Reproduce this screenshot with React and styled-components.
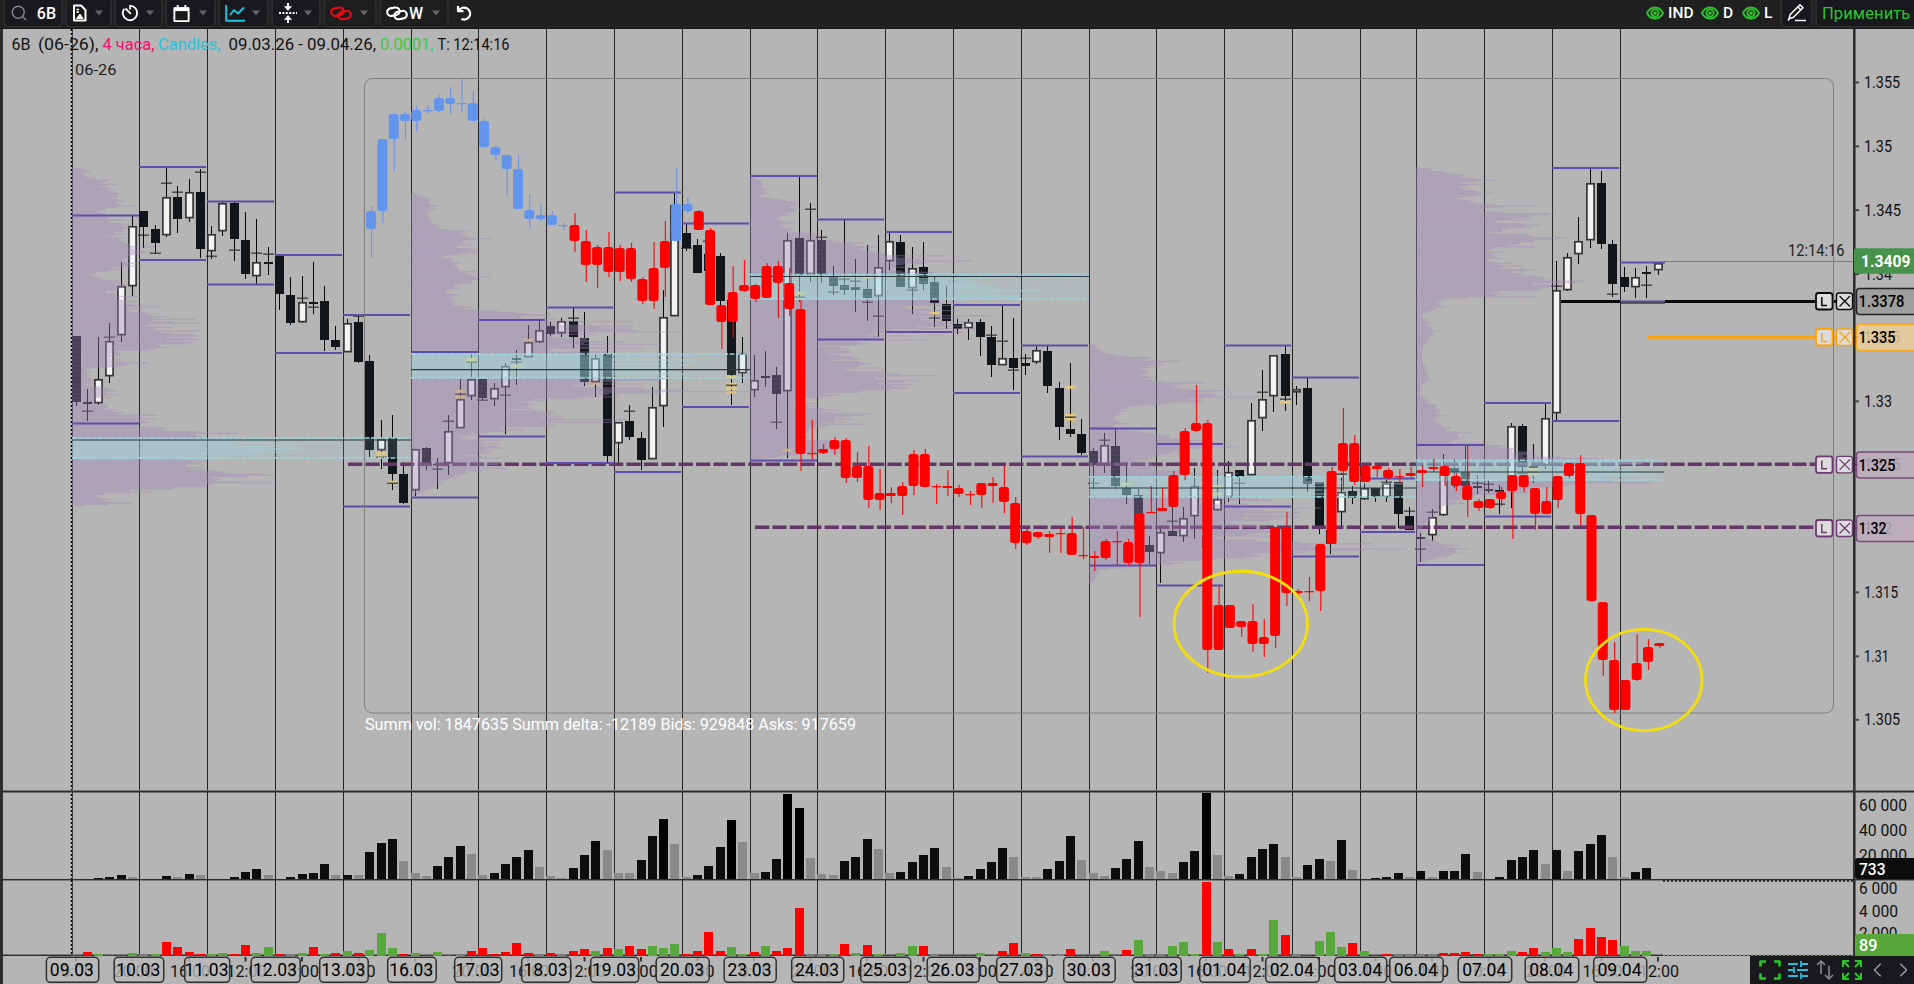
import React from "react";
import styled, { createGlobalStyle } from "styled-components";
import { Search } from "lucide-react";

const FONT = '"Roboto", "Noto Sans", sans-serif';

const GlobalStyle = createGlobalStyle`
  body {
    margin: 0;
    background: #b5b5b5;
    font-family: ${FONT};
    overflow: hidden;
  }

  svg {
    display: block;
    flex: none;
  }
`;

const Terminal = styled.div`
  display: flex;
  flex-direction: column;
  width: 1914px;
  height: 984px;
  overflow: hidden;
  background: #b5b5b5;
`;

const TopBar = styled.header`
  display: flex;
  align-items: flex-start;
  box-sizing: border-box;
  height: 29px;
  padding-left: 3px;
  background: #202020;
  border-bottom: 1px solid #161616;
`;

const ToolButton = styled.button`
  display: flex;
  align-items: center;
  justify-content: space-between;
  box-sizing: border-box;
  width: ${(props) => props.$width}px;
  height: 31px;
  margin: -3px 2px 0 0;
  padding: 1px ${(props) => props.$right || 7}px 0 5px;
  background: ${(props) => (props.$flat ? "#1e1e1e" : "#18181d")};
  border: 2px solid #2b2b2d;
  border-radius: 6px;
  color: ${(props) => props.$color || "#fff"};
  font-family: ${FONT};
  font-size: 16px;
  font-weight: 500;
  flex: none;
`;

const PlainTool = styled.span`
  display: flex;
  align-items: center;
  height: 25px;
  margin-left: 5px;
`;

const LinkLabel = styled.span`
  margin-left: -8px;
`;

const Spacer = styled.div`
  flex: 1;
`;

const Toggle = styled.span`
  display: flex;
  align-items: center;
  gap: 4px;
  box-sizing: border-box;
  width: ${(props) => props.$width}px;
  height: 26px;
  color: #fff;
  font-size: 15.5px;
  font-weight: 500;
`;

const Apply = styled.button`
  box-sizing: border-box;
  width: 99px;
  height: 31px;
  margin: -3px 0 0 0;
  padding: 1px 0 0 5px;
  text-align: left;
  white-space: nowrap;
  background: #18181d;
  border: 2px solid #2b2b2d;
  border-right: 0;
  border-radius: 6px 0 0 6px;
  color: #2dc52d;
  font-family: ${FONT};
  font-size: 16.5px;
  letter-spacing: 0.1px;
`;

const Workspace = styled.main`
  display: grid;
  box-sizing: border-box;
  grid-template-columns: 1850px 61px;
  grid-template-rows: 761px 89px 77px 28px;
  height: 955px;
  border-left: 3px solid #2e2e2f;
`;

const TimeRow = styled.div`
  grid-column: 1 / 3;
  display: flex;
`;

const BottomTools = styled.div`
  display: flex;
  align-items: center;
  box-sizing: border-box;
  width: 164px;
  height: 28px;
  padding: 0 0 0 9px;
  gap: 7px;
  background: #18181d;
`;

/* ---------- data ---------- */

const STEP = 11.3;
const FIRST_X = 72;
const barLeft = (i) => Math.floor(FIRST_X + STEP * i);

// U - up, D - down, J - doji; top bottom high low, then t - poc mark, y - cluster mark
const CANDLES = `
D 336 402 336 406|J 402 404 389 421 t411|U 379 403 337 405|U 341 376 323 383 t337|U 286 335 262 342|U 226 286 216 296
D 211 227 211 248 t235|D 229 243 225 254 t253|U 197 235 168 237 t183|D 197 219 186 233 t192|U 192 218 179 222|D 192 249 169 258 t172
U 234 251 226 259 t256|U 203 231 202 236|D 203 239 202 261 t250|D 240 274 212 279|U 262 276 219 284 t253|J 262 264 247 275 t254
D 255 294 255 310|D 295 323 277 325|U 302 322 276 323 t298|J 302 304 262 314 t307|D 301 340 286 351|D 340 347 326 350
U 323 352 319 352|D 322 362 315 363 t316|D 361 450 355 457|U 439 450 420 469 y453 y456 t457|D 438 474 415 490 y482 t483|D 474 503 462 504
U 449 490 449 496|D 448 464 447 470|J 464 465 458 489 t469|U 431 463 415 475 t421|U 399 428 379 428 y391 y397 t394|U 379 396 353 400 y359 y361 t362
D 379 398 379 401 t400|U 388 399 383 406|U 366 387 363 434 t395|J 358 360 350 385 t362 y366|U 342 357 325 357 y340|U 330 342 320 343
D 326 334 322 336|U 321 333 318 337|D 321 337 308 348 t318|D 338 382 312 386|U 358 382 354 397 y383|D 354 456 336 462
U 422 443 422 463|D 421 437 405 440 t411|D 438 460 432 470|U 407 459 387 459|U 317 406 290 427|U 205 316 193 316
D 233 248 224 251 t248|D 245 273 239 273|D 254 271 241 271 t241|D 256 301 253 305|D 300 375 300 405 y377 y384 y388 y392 t385|U 353 373 337 383
U 380 390 355 397|J 376 378 351 387|D 375 394 367 429 t422|U 240 391 233 458 y450|D 238 275 176 302 y293 y298 t297|U 240 274 203 282 t209
D 240 275 230 283 t237|D 277 286 266 295 t292|D 285 290 220 295 t279|D 287 290 259 312 t281|D 289 298 245 321 t302 y277|U 267 296 235 337 t316
U 241 261 232 270|D 242 287 235 287|U 268 288 247 314 t290|D 267 284 242 290|D 282 303 277 327 y313 t318|D 304 321 286 329
D 324 329 319 334|U 322 328 319 340|D 322 337 319 356|D 337 365 326 377 t335|U 358 365 305 365 t341|D 358 368 318 390 t370
J 363 366 354 375 t358|U 350 362 346 364|D 351 386 346 393|D 388 427 382 440|D 429 434 363 437 y387 y415 y419 t417|D 434 453 419 455
D 451 465 448 489 t483|U 445 464 433 473 t440|D 446 486 429 489|D 488 495 462 504 y484|D 495 530 489 530|D 545 552 536 564
U 532 553 528 583|D 531 536 497 536 t521|U 518 536 507 542|U 486 516 468 539|D 536 548 530 552 y549|U 499 510 470 511 y486 y494
U 472 497 461 502|D 470 477 470 504 t483|U 420 475 403 475|U 399 418 370 431 t392|U 355 396 355 412|D 354 396 346 411 t399 y402
U 389 392 386 405|D 388 484 378 492|D 482 529 482 534|D 530 544 530 554|U 492 512 473 527 y476 t474|D 491 498 486 504
U 488 499 483 500|D 488 497 488 502|U 483 497 480 502 t482|D 482 514 482 528|D 516 530 507 530 t511|J 537 539 533 562 t549
U 517 535 509 541 t512|U 474 515 454 516|D 468 472 460 488|D 472 486 445 488|J 486 488 475 494 t483|J 489 491 480 493 t484
J 490 492 485 514 t504|U 426 490 423 508|D 426 467 424 474 t473|D 466 468 444 483 y469 y472 y474 t472|U 418 465 403 469|U 290 413 261 420 t286
U 257 290 253 291|U 241 254 217 264|U 183 240 168 248|D 183 244 171 249|D 244 284 240 297 t294|D 277 287 267 292
U 277 287 268 298|J 272 274 266 298 t285|U 263 270 263 275`
  .trim()
  .split(/[|\n]/)
  .map((row) => {
    const [kind, top, bottom, high, low, ...marks] = row.split(" ");
    return { kind, top: +top, bottom: +bottom, high: +high, low: +low, marks };
  });

// second instrument, drawn over the main one: top bottom high low
const OVERLAY_START = 26;
const OVERLAY = `
211 229 206 258|139 211 139 223|114 139 114 171|114 121 112 140|110 121 106 131|110 111 105 114|98 111 95 112|98 104 87 114
103 104 79 112|103 121 91 121|121 147 119 148|147 155 145 161|155 169 155 197|169 209 155 209|210 219 194 229|215 219 203 221
215 225 211 225|225 226 223 230|225 241 213 252|241 265 230 282|247 265 245 288|247 272 232 277|248 272 245 281|248 279 243 282
279 301 277 304|268 301 242 309|241 268 221 297|204 241 168 241|204 211 198 213|211 230 210 230|230 305 228 305|305 322 305 349
292 322 266 338|285 291 260 292|285 299 284 302|266 298 263 298|266 283 261 318|283 309 268 316|309 454 300 471|453 454 420 460
449 453 444 454|440 449 437 455|440 478 438 483|466 478 452 482|466 500 446 508|493 500 469 510|493 496 487 503|486 496 482 515
454 486 450 495|454 487 449 487|486 487 484 504|486 488 470 496|488 494 485 497|494 495 491 505|483 495 483 508|483 486 477 503
487 502 466 513|503 543 497 549|531 543 529 545|532 537 532 539|534 537 531 553|533 534 527 553|533 555 517 555|555 556 527 559
556 558 551 571|541 558 539 560|541 542 531 565|542 563 539 565|513 563 513 617|512 513 486 513|508 511 488 511|475 507 471 507
431 475 428 480|423 431 385 432|423 650 420 673|605 650 586 650|605 628 605 628|621 627 621 637|621 644 604 652|637 644 619 657
527 636 527 648|527 593 512 606|591 593 589 595|591 592 577 601|544 591 544 611|471 544 467 544|443 471 408 490|443 482 435 485
466 482 466 482|466 469 465 477|470 478 468 480|476 477 469 483|473 476 467 478|470 473 465 487|467 469 459 472|466 476 465 486
476 486 473 491|486 500 445 517|501 508 499 511|499 508 499 509|492 499 487 506|475 491 475 539|475 487 475 492|488 514 488 530
501 514 487 514|476 500 476 508|463 476 463 478|463 514 455 526|515 601 515 602|602 660 602 676|660 710 642 713|680 710 680 710
663 680 634 681|647 662 639 670|643 646 643 648`
  .trim()
  .split(/[|\n]/)
  .map((row) => row.split(" ").map(Number));

const isBlue = (i) => i < 44 || i === 53 || i === 54;

// x, high line, low line
const DAYS = [
  [72, 215.5, 423.5], [139, 167, 260], [207, 201.5, 284.5], [275, 255, 353], [343, 315, 506.5], [411, 352, 497.5],
  [478, 320, 436.5], [546, 307.5, 463], [614, 192.5, 472], [682, 223.5, 407], [750, 176, 460.5], [817, 219.5, 339.5],
  [885, 232, 332], [953, 305, 393], [1021, 345.5, 456.5], [1089, 428.5, 565.5], [1156, 444, 585.5], [1224, 345.5, 506.5],
  [1292, 377.5, 556.5], [1360, 478.5, 532], [1416, 445, 565], [1484, 403, 516.5], [1552, 168, 421], [1620, 262.5, 301.5],
];

const WEEKS = [
  {
    from: 72, to: 411, top: 438, bottom: 458, poc: 440,
    shape: "167:0 170:22 174:10 182:35 186:30 192:45 198:48 201:58 206:45 213:25 222:45 228:66 236:40 245:75 252:85 256:60 265:70 272:30 275:20 284:55 290:40 298:55 308:68 315:85 322:95 330:95 337:125 342:112 347:90 352:45 358:40 362:75 368:15 380:20 385:18 390:45 400:20 410:45 420:85 425:65 430:105 436:150 440:190 445:205 448:235 454:190 459:120 465:125 471:150 474:200 478:165 482:155 488:110 490:70 494:25 500:40 503:45 506:0",
  },
  {
    from: 411, to: 750, top: 354, bottom: 378, poc: 369.7,
    shape: "192:0 197:18 206:22 213:15 220:20 228:35 233:55 238:60 244:45 252:70 256:35 265:50 273:70 276:80 282:65 290:40 297:50 305:45 310:75 314:120 318:150 325:190 329:225 333:180 342:190 348:170 354:200 360:270 368:240 375:260 382:200 387:220 392:265 395:200 400:140 405:110 412:130 418:165 424:140 428:110 436:55 443:80 447:95 455:60 462:85 470:65 478:40 485:25 492:12 496:0",
  },
  {
    from: 750, to: 1089, top: 274.5, bottom: 299, poc: 276.5,
    shape: "176:0 180:12 190:14 196:10 201:45 208:50 210:62 214:30 222:35 228:30 234:65 241:100 248:120 255:180 260:225 265:160 270:180 275:200 282:260 288:260 295:255 301:230 307:190 315:180 321:240 328:165 336:150 340:130 346:90 355:95 365:110 372:130 380:150 386:175 390:120 394:85 398:55 405:45 413:110 420:100 428:65 436:50 445:95 450:90 455:40 460:0",
  },
  {
    from: 1089, to: 1416, top: 476.7, bottom: 497, poc: 488,
    shape: "344:5 352:15 358:55 361:70 370:55 378:70 382:85 392:110 396:130 402:100 406:50 412:30 418:28 422:38 426:30 431:55 437:105 440:120 445:150 450:110 457:57 465:60 474:120 480:260 488:250 495:220 500:130 510:190 515:205 522:150 530:170 540:160 546:260 549:290 553:200 560:110 565:60 570:8 580:6 583:0",
  },
  {
    from: 1416, to: 1664, top: 460.3, bottom: 480, poc: 472,
    shape: "167:5 173:40 178:65 183:50 188:45 192:75 198:45 205:90 210:70 215:125 220:80 226:128 232:90 238:145 243:125 250:90 256:85 262:95 268:110 275:130 281:150 286:130 292:95 296:90 299:25 310:20 315:4 325:15 332:20 340:12 350:5 365:8 378:15 385:5 395:4 402:15 410:25 420:20 430:35 436:50 441:35 446:90 455:130 460:200 465:225 472:240 478:210 483:170 490:100 497:50 505:30 515:20 525:8 535:5 543:25 549:50 555:35 560:10 563:0",
  },
];

const LEVEL = 1.276;

const profileRows = ({ shape }) => {
  const points = shape.split(" ").map((p) => p.split(":").map(Number));
  const rows = [];
  let k = 0;
  for (let y = points[0][0], n = 0; y < points[points.length - 1][0]; y += LEVEL, n++) {
    while (points[k + 1][0] < y) k++;
    const [y0, w0] = points[k];
    const [y1, w1] = points[k + 1];
    const noise = Math.sin(n * 12.9898) * 43758.5453;
    const rnd = noise - Math.floor(noise);
    const spike = rnd > 0.93 ? 0.2 : 0;
    const width = (w0 + ((w1 - w0) * (y - y0)) / (y1 - y0)) * (0.76 + rnd * 0.4 + spike);
    rows.push({ y, width });
  }
  return rows;
};

// g - outside of the main session, d - regular, k - extreme
const VOLUME =
  "d0 d0 d1 d2 d4 g2 g0 g0 d3 g2 d5 g4 g0 g0 d2 d7 d10 g4 g0 d2 d5 d6 d15 g4 d4 g4 d27 d36 d40 g18 g6 g3 d13 d22 d33 g25 g4 d6 d15 d22 d29 g12 g3 g1 d11 d24 d38 g29 g6 g6 " +
  "d19 d43 k60 g35 g2 d4 d13 d32 k59 g37 g6 d7 d20 k85 k71 g21 g5 g4 d18 d22 d40 g30 g6 d7 d17 d24 d31 g12 g1 d3 d10 d17 d31 g22 g2 g2 d10 d18 d43 g19 g6 g3 d11 d20 d38 g12 g8 g6 d17 d28 " +
  "k86 g24 g3 d5 d22 d30 d35 g22 g2 d14 d20 g18 d39 g9 g0 d1 d2 d6 g2 d8 g2 d8 d8 d25 g7 g0 d2 d19 d22 d29 g15 d29 g8 d28 d35 d44 g22 g2 d7 d11";

const DELTA =
  "r1 r4 g2 r-1 r1 g3 g0 g2 r14 r9 r4 r2 g2 g3 r2 r11 g3 g9 r2 g1 g3 r9 g2 r3 g5 r3 g6 g23 g8 r2 g3 r1 g4 r1 g-1 r5 r8 r2 r4 r13 r3 g1 r3 g0 r5 r7 g5 r8 g7 r10 " +
  "r7 g10 g8 g12 r2 r5 r24 r5 g9 g2 r4 g10 r5 r8 r48 g1 g0 g2 r12 g3 r11 g2 r1 g3 g10 r10 g0 r-1 r1 r-1 g3 r1 r5 r13 g3 r2 g0 g-1 r7 r1 r1 g5 r-1 r6 g16 g0 g0 g10 g14 g2 " +
  "r74 g14 r7 g2 r7 g2 g36 r21 g1 r-1 g15 g24 g9 r13 g5 r1 r2 g1 g1 g1 g1 r3 r3 r4 r2 g2 g2 g5 r4 r8 g4 g8 g4 r17 r28 r19 r16 g10 g5 g5";

const parseBars = (text) =>
  text.split(" ").map((item) => ({ kind: item[0], value: Number(item.slice(1)) }));

const BAR_COLORS = { g: "#8a8a8a", d: "#0d0d0d", k: "#000" };
const DELTA_COLORS = { r: "#ff0000", g: "#58a73a" };

const PRICES = [
  ["1.355", 82.5, 36], ["1.35", 146.3, 28], ["1.345", 210.1, 37], ["1.34", 274.1, 28], ["1.335", 337.5, 36], ["1.33", 401.3, 28],
  ["1.325", 464.8, 36], ["1.32", 528.3, 28], ["1.315", 592.3, 34], ["1.31", 656.3, 25], ["1.305", 719.8, 36],
];

const TAGS = [
  { price: "1.3378", y: 301, color: "#0a0a0a", fill: "#9a9a9a", width: 46 },
  { price: "1.335", y: 337, color: "#ffa30a", fill: "#ebd09a", width: 37 },
  { price: "1.325", y: 464.4, color: "#6d3b70", fill: "#bdabbc", width: 37 },
  { price: "1.32", y: 528, color: "#6d3b70", fill: "#bdabbc", width: 28 },
];

const DATES = [
  ["09.03", 45.7, 99], ["10.03", 113.5, 164], ["11.03", 184, 230], ["12.03", 250.5, 300.5], ["13.03", 319, 368.5],
  ["16.03", 387, 436.5], ["17.03", 454, 502], ["18.03", 521, 571], ["19.03", 590, 639], ["20.03", 655.5, 709.5],
  ["23.03", 723.5, 776.5], ["24.03", 791, 844], ["25.03", 860, 911], ["26.03", 926.5, 979.5], ["27.03", 996, 1047.5],
  ["30.03", 1063, 1115.5], ["31.03", 1132, 1181.5], ["01.04", 1199, 1250.5], ["02.04", 1265, 1319.5], ["03.04", 1334, 1387],
  ["06.04", 1389, 1443.5], ["07.04", 1457.5, 1512], ["08.04", 1524.5, 1579], ["09.04", 1593, 1647],
];

const HOURS = ["0:00", "20:00", "16:00", "12:00", "8:00", "4:00"];

/* ---------- chart parts ---------- */

const Label = ({ x, y, w, size = 16, fill = "#111", weight = 400, children, ...rest }) => (
  <text
    x={x}
    y={y}
    textLength={w}
    lengthAdjust="spacingAndGlyphs"
    fontFamily={FONT}
    fontSize={size}
    fontWeight={weight}
    fill={fill}
    xmlSpace="preserve"
    {...rest}
  >
    {children}
  </text>
);

const DayLines = ({ top, bottom }) => (
  <g>
    {DAYS.slice(1).map(([x]) => (
      <path key={x} d={`M${x + 0.5} ${top}V${bottom}`} stroke="#242424" strokeWidth="1" />
    ))}
    <path d={`M72.5 ${top}V${bottom}`} stroke="#444" strokeWidth="1" />
    <path d={`M71.5 ${top}V${bottom}`} stroke="#000" strokeWidth="1.4" strokeDasharray="2 2" />
  </g>
);

const Candle = ({ x, candle }) => {
  const { kind, top, bottom, high, low, marks } = candle;
  const up = kind === "U";
  return (
    <g>
      <rect x={x + 4} y={high} width="1" height={Math.max(low - high, 1)} fill="#080808" />
      {marks.map((mark) => {
        const y = Number(mark.slice(1));
        return mark[0] === "y" ? (
          <rect key={mark} x={x - 1} y={y - 1.2} width="10.5" height="2.8" fill="#e6c87a" />
        ) : (
          <rect key={mark} x={x - 1} y={y - 0.5} width="11" height="1.4" fill="#262626" opacity=".8" />
        );
      })}
      {up ? (
        <rect
          x={x + 0.9}
          y={top + 0.8}
          width="7.2"
          height={Math.max(bottom - top - 1.2, 2)}
          fill="#f3f3f3"
          stroke="#363636"
          strokeWidth="1.7"
        />
      ) : (
        <rect x={x} y={top} width="9" height={bottom - top} fill="#101619" />
      )}
    </g>
  );
};

const OverlayCandle = ({ index, data }) => {
  const [top, bottom, high, low] = data;
  const cx = FIRST_X + STEP * index + 5.3;
  const color = isBlue(index) ? "#6495ed" : "#ff0000";
  const thin = bottom - top < 2;
  return (
    <g fill={color}>
      <rect x={cx - 0.1} y={high} width="1.2" height={Math.max(low - high, 1)} opacity=".9" />
      {thin ? (
        <rect x={cx - 4.6} y={top} width="9.6" height="1.3" opacity=".9" />
      ) : (
        <rect x={cx - 5} y={top} width="10" height={bottom - top} rx={Math.min(2.5, (bottom - top) / 2)} />
      )}
    </g>
  );
};

const Profile = ({ week }) => (
  <g>
    {profileRows(week).map(({ y, width }) => {
      const inside = y >= week.top && y <= week.bottom;
      return (
        <rect
          key={y}
          x={week.from}
          y={y}
          width={Math.min(width, 340)}
          height={LEVEL}
          fill={inside ? "rgb(160,210,220)" : "rgb(162,136,185)"}
          opacity={inside ? 0.5 : 0.42}
        />
      );
    })}
    <rect x={week.from} y={week.top} width={week.to - week.from} height={week.bottom - week.top} fill="#a5d5df" opacity=".14" />
    <path
      d={`M${week.from} ${week.top}H${week.to}M${week.from} ${week.bottom}H${week.to}`}
      stroke="#9ad3df"
      strokeWidth="1.6"
      strokeDasharray="5 1.5"
    />
    <path d={`M${week.from} ${week.poc}H${week.to}`} stroke="#2d3a3c" strokeWidth="1.2" />
  </g>
);

const PriceChart = () => (
  <svg width="1850" height="761" viewBox="3 29 1850 761">
    <DayLines top={29} bottom={791} />

    {CANDLES.map((candle, i) => (
      <Candle key={i} x={barLeft(i)} candle={candle} />
    ))}

    <path d="M348 464.3H1816M755 527.3H1816" stroke="#653768" strokeWidth="3.4" strokeDasharray="14.3 3.1" fill="none" />

    {WEEKS.map((week) => (
      <Profile key={week.from} week={week} />
    ))}

    {DAYS.map(([x, high, low], i) => {
      const end = i === DAYS.length - 1 ? 1665 : DAYS[i + 1][0] - (i % 5 === 0 ? 0 : 1);
      return <path key={x} d={`M${x} ${high}H${end}M${x} ${low}H${end}`} stroke="#5f4cab" strokeWidth="2" />;
    })}

    <path d="M1665 261.5H1853" stroke="#4f9a55" strokeWidth="1" />
    <path d="M1561 301.5H1620M1665 301.5H1853" stroke="#0a0a0a" strokeWidth="2.8" />
    <path d="M1620 303H1665" stroke="#0a0a0a" strokeWidth="1.2" />
    <path d="M1647 337.3H1853" stroke="#ffa30a" strokeWidth="2.8" />

    <rect x="364.5" y="78.5" width="1469" height="634.5" rx="8" fill="none" stroke="#7e7e7e" />

    {OVERLAY.map((data, k) => (
      <OverlayCandle key={k} index={OVERLAY_START + k} data={data} />
    ))}

    <g fill="none" stroke="#f3dd0c" strokeWidth="2.9">
      <ellipse cx="1240.8" cy="624" rx="66.7" ry="52.7" />
      <ellipse cx="1643.8" cy="680" rx="58.2" ry="50.6" />
    </g>

    {TAGS.map(({ price, y, color }) => (
      <g key={price} stroke={color} fill="#dcdcdc">
        <rect x="1816" y={y - 8} width="16.5" height="16.5" rx="2.5" strokeWidth="1.8" />
        <rect x="1836.5" y={y - 8} width="16" height="16.5" rx="2.5" strokeWidth="1.4" />
        <path d={`M1821.8 ${y - 4}v8.4h5.2`} fill="none" strokeWidth="1.5" />
        <path d={`M1839.5 ${y - 5}l10.5 10.5m0 -10.5l-10.5 10.5`} fill="none" strokeWidth="1.3" />
      </g>
    ))}

    <Label x={11.5} y={50} w={19}>6B</Label>
    <Label x={38} y={50} w={60.5}>(06-26),</Label>
    <Label x={102.5} y={50} w={52} fill="#f0106c">4 часа,</Label>
    <Label x={158} y={50} w={62.5} fill="#22c4e0">Candles,</Label>
    <Label x={228.5} y={50} w={147.5}>09.03.26 - 09.04.26,</Label>
    <Label x={380} y={50} w={53.5} fill="#35cd35">0.0001,</Label>
    <Label x={437.5} y={50} w={72}>T: 12:14:16</Label>
    <Label x={75} y={74.7} w={41.5} size={15} fill="#222">06-26</Label>
    <Label x={1788} y={255.7} w={56.5} fill="#222">12:14:16</Label>
    <Label x={365} y={730} w={491} fill="#fff">
      Summ vol: 1847635 Summ delta: -12189 Bids: 929848 Asks: 917659
    </Label>
  </svg>
);

const PriceAxis = () => (
  <svg width="61" height="761" viewBox="1853 29 61 761">
    <rect x="1853" y="29" width="2.6" height="762" fill="#303030" />
    {PRICES.map(([text, y, w]) => (
      <g key={text}>
        <rect x="1855" y={y - 1} width="4" height="2" fill="#444" />
        <Label x={1864} y={y + 5.5} w={w}>{text}</Label>
      </g>
    ))}
    <rect x="1854" y="248.3" width="70" height="25.5" rx="3" fill="#46924a" />
    <Label x={1861} y={266.7} w={49.5} size={17} fill="#fff" weight={700}>1.3409</Label>
    {TAGS.map(({ price, y, color, fill, width }) => (
      <g key={price}>
        <rect x="1856.5" y={y - 12.5} width="70" height="26" rx="3" fill={fill} fillOpacity=".84" stroke={color} strokeWidth="1.5" strokeOpacity=".85" />
        <Label x={1858.5} y={y + 6.3} w={width} fill="#000" weight={500}>{price}</Label>
      </g>
    ))}
  </svg>
);

const VolumePanel = () => (
  <svg width="1850" height="89" viewBox="3 790 1850 89">
    <DayLines top={790} bottom={880} />
    <rect x="3" y="790" width="1850" height="1" fill="#777" />
    <rect x="3" y="791" width="1850" height="1.5" fill="#2c2c2c" />
    {parseBars(VOLUME).map(({ kind, value }, i) => (
      <rect key={i} x={barLeft(i)} y={879 - value} width="9" height={value} fill={BAR_COLORS[kind]} />
    ))}
  </svg>
);

const VolumeAxis = () => (
  <svg width="61" height="89" viewBox="1853 790 61 89">
    <rect x="1853" y="790" width="61" height="1" fill="#777" />
    <rect x="1853" y="791" width="61" height="1.5" fill="#2c2c2c" />
    <rect x="1853" y="790" width="2.6" height="89" fill="#303030" />
    <Label x={1859} y={811} w={48}>60 000</Label>
    <Label x={1859} y={836} w={48}>40 000</Label>
    <Label x={1859} y={860.5} w={48}>20 000</Label>
    <rect x="1855" y="858" width="70" height="21" rx="3" fill="#0c0c0c" />
    <Label x={1859} y={874.7} w={26.5} fill="#fff" weight={500}>733</Label>
  </svg>
);

const DeltaPanel = () => (
  <svg width="1850" height="77" viewBox="3 879 1850 77">
    <DayLines top={880} bottom={956} />
    <rect x="3" y="879" width="1850" height="1.4" fill="#2c2c2c" />
    <path d="M1663 881H1853" stroke="#111" strokeWidth="1.6" strokeDasharray="2 2" />
    <rect x="3" y="954" width="1660" height="1" fill="#777" />
    <rect x="3" y="955" width="1850" height="1" fill="#2c2c2c" />
    <path d="M1663 955.4H1853" stroke="#58a73a" strokeWidth="1.4" strokeDasharray="2 2" />
    {parseBars(DELTA).map(({ kind, value }, i) => (
      <rect key={i} x={barLeft(i)} y={956 - Math.max(value, 1)} width="9" height={Math.max(value, 1)} fill={DELTA_COLORS[kind]} />
    ))}
  </svg>
);

const DeltaAxis = () => (
  <svg width="61" height="77" viewBox="1853 879 61 77">
    <rect x="1853" y="879" width="2.6" height="77" fill="#303030" />
    <rect x="1853" y="879" width="61" height="1.4" fill="#2c2c2c" />
    <Label x={1859} y={894} w={38.5}>6 000</Label>
    <Label x={1859} y={916.7} w={39}>4 000</Label>
    <Label x={1859} y={938.7} w={38.5}>2 000</Label>
    <rect x="1855" y="934" width="70" height="23" rx="3" fill="#58a73a" />
    <Label x={1859} y={950.8} w={18.5} fill="#fff" weight={500}>89</Label>
  </svg>
);

const TimeAxis = () => (
  <svg width="1747" height="28" viewBox="3 956 1747 28">
    {Array.from({ length: 29 }, (_, k) => {
      const x = 76 + STEP * 5 * k;
      const text = HOURS[(k > 23 ? k + 5 : k) % 6];
      return (
        <g key={k}>
          <rect x={x - 1} y="957" width="2" height="4.5" fill="#333" />
          <Label x={x + 1} y={977} w={text.length * 8} textAnchor="middle">{text}</Label>
        </g>
      );
    })}
    {DATES.map(([text, from, to]) => (
      <g key={text}>
        <rect x={from + 0.7} y="957.3" width={to - from - 1} height="25" rx="4" fill="#bababa" fillOpacity=".78" stroke="#303030" strokeWidth="1.5" />
        <Label x={(from + to) / 2 - 0.5} y={976.3} w={44} size={17.5} textAnchor="middle" fill="#000">{text}</Label>
      </g>
    ))}
  </svg>
);

/* ---------- icons ---------- */

const Icon = ({ size = 20, width, children, stroke = "currentColor", sw = 2, viewBox = "0 0 20 20" }) => (
  <svg
    width={width || size}
    height={size}
    viewBox={viewBox}
    fill="none"
    stroke={stroke}
    strokeWidth={sw}
    strokeLinejoin="round"
  >
    {children}
  </svg>
);

const Caret = () => (
  <svg width="8" height="6" viewBox="0 0 8 6">
    <path d="M0 0.5H8L4 5.5Z" fill="#66666a" />
  </svg>
);

const DocIcon = () => (
  <Icon size={18} width={15} viewBox="0 0 15 18">
    <path d="M2 1.5H9L13.5 6V16.5H2Z" />
    <path d="M4.5 5.5H7M4.5 8H7" strokeWidth="1.5" />
    <path d="M4.5 14.5L8 10L11 14.5Z" fill="currentColor" strokeWidth="1" />
  </Icon>
);

const TimerIcon = () => (
  <Icon size={18}>
    <path d="M10 2A8 8 0 1 1 3.6 5.2" />
    <path d="M10 1V6M5 5L11 11" />
  </Icon>
);

const CalendarIcon = () => (
  <Icon size={19}>
    <path d="M2.5 4.5H17.5V18H2.5Z" />
    <path d="M2.5 5.5H17.5" strokeWidth="4" />
    <path d="M6 1V5M14 1V5" />
  </Icon>
);

const LineIcon = () => (
  <Icon size={18} width={21} stroke="#1cc3dd" viewBox="0 0 21 18">
    <path d="M1.2 1V16.8H20" />
    <path d="M5 11L9 6L13 9.5L19 3.5" />
  </Icon>
);

const SqueezeIcon = () => (
  <Icon size={20}>
    <path d="M1 10H19" strokeDasharray="2 1.4" />
    <path d="M10 0V6M10 20V14" />
    <path d="M6.5 3.5H13.5L10 7.5ZM6.5 16.5H13.5L10 12.5Z" fill="currentColor" strokeWidth=".6" />
  </Icon>
);

const ChainIcon = () => (
  <Icon size={15} width={22} viewBox="0 0 22 15" sw={2.1}>
    <rect x="1.2" y="2" width="12.4" height="7.6" rx="3.8" transform="rotate(-10 7 6)" />
    <rect x="8.4" y="5.2" width="12.4" height="7.6" rx="3.8" transform="rotate(-10 15 9)" />
  </Icon>
);

const UndoIcon = () => (
  <Icon size={16} viewBox="0 0 16 16" sw={2.2}>
    <path d="M2 1V6.2H7.5" />
    <path d="M2.5 6C4.5 2.6 8.5 1.6 11.5 3.6C14.6 5.8 15 10 12.6 12.6C10.8 14.5 8 15 5.4 14" />
  </Icon>
);

const EyeIcon = () => (
  <Icon size={14} width={18} stroke="#2dc52d" viewBox="0 0 18 14" sw={1.9}>
    <path d="M1 7C4.5 -0.3 13.5 -0.3 17 7C13.5 14.3 4.5 14.3 1 7Z" />
    <circle cx="9" cy="7" r="3.6" />
    <circle cx="9" cy="7" r="0.9" />
  </Icon>
);

const PencilIcon = () => (
  <Icon size={20} sw={1.5}>
    <path d="M2 15.5L3.2 11.5L13 1.8L16 4.8L6.2 14.5Z M11 4L14 7" />
    <path d="M8 17.5H19M1 17.5L3 15" />
  </Icon>
);

const FrameIcon = () => (
  <Icon size={20} width={22} stroke="#25c825" sw={2.6} viewBox="0 0 22 20">
    <path d="M7 1.5H1.5V6.5M15 1.5H20.5V6.5M7 18.5H1.5V13.5M15 18.5H20.5V13.5" />
  </Icon>
);

const SlidersIcon = () => (
  <Icon size={20} stroke="#22bfe0" sw={1.8}>
    <path d="M0 4H10M14 4H20M0 10H5M9 10H20M0 16H10M14 16H20M13 1V7M6 7V13M13 13V19" />
  </Icon>
);

const ArrowsIcon = () => (
  <Icon size={20} stroke="#8a8a8e" sw={1.6}>
    <path d="M6 14V1M2 5L6 1L10 5M14 6V19M10 15L14 19L18 15" />
  </Icon>
);

const ExpandIcon = () => (
  <Icon size={20} stroke="#25c825">
    <path d="M7 7L2 2M1 7V1H7M13 7L18 2M13 1H19V7M7 13L2 18M1 13V19H7M13 13L18 18M19 13V19H13" />
  </Icon>
);

const Chevron = ({ flip }) => (
  <Icon size={18} stroke="#9a9a9e" sw={1.7}>
    <path d={flip ? "M7 3L14 10L7 17" : "M13 3L6 10L13 17"} />
  </Icon>
);

const App = () => (
  <>
    <GlobalStyle />
    <Terminal>
      <TopBar>
        <ToolButton $width={60} $right={5}>
          <Search size={18} color="#858588" strokeWidth={1.9} />
          6B
        </ToolButton>
        <ToolButton $width={47}><DocIcon /><Caret /></ToolButton>
        <ToolButton $width={49}><TimerIcon /><Caret /></ToolButton>
        <ToolButton $width={51}><CalendarIcon /><Caret /></ToolButton>
        <ToolButton $width={51}><LineIcon /><Caret /></ToolButton>
        <ToolButton $width={50}><SqueezeIcon /><Caret /></ToolButton>
        <ToolButton $width={54} $flat $color="#f00810"><ChainIcon /><Caret /></ToolButton>
        <ToolButton $width={70} $flat>
          <ChainIcon />
          <LinkLabel>W</LinkLabel>
          <Caret />
        </ToolButton>
        <PlainTool><Icon size={0} /><span style={{ color: "#fff" }}><UndoIcon /></span></PlainTool>
        <Spacer />
        <Toggle $width={55}><EyeIcon />IND</Toggle>
        <Toggle $width={41}><EyeIcon />D</Toggle>
        <Toggle $width={38}><EyeIcon />L</Toggle>
        <ToolButton $width={33} $right={4}><PencilIcon /></ToolButton>
        <Apply>Применить</Apply>
      </TopBar>
      <Workspace>
        <PriceChart />
        <PriceAxis />
        <VolumePanel />
        <VolumeAxis />
        <DeltaPanel />
        <DeltaAxis />
        <TimeRow>
          <TimeAxis />
          <BottomTools>
            <FrameIcon />
            <SlidersIcon />
            <ArrowsIcon />
            <ExpandIcon />
            <Chevron />
            <Chevron flip />
          </BottomTools>
        </TimeRow>
      </Workspace>
    </Terminal>
  </>
);

export default App;
